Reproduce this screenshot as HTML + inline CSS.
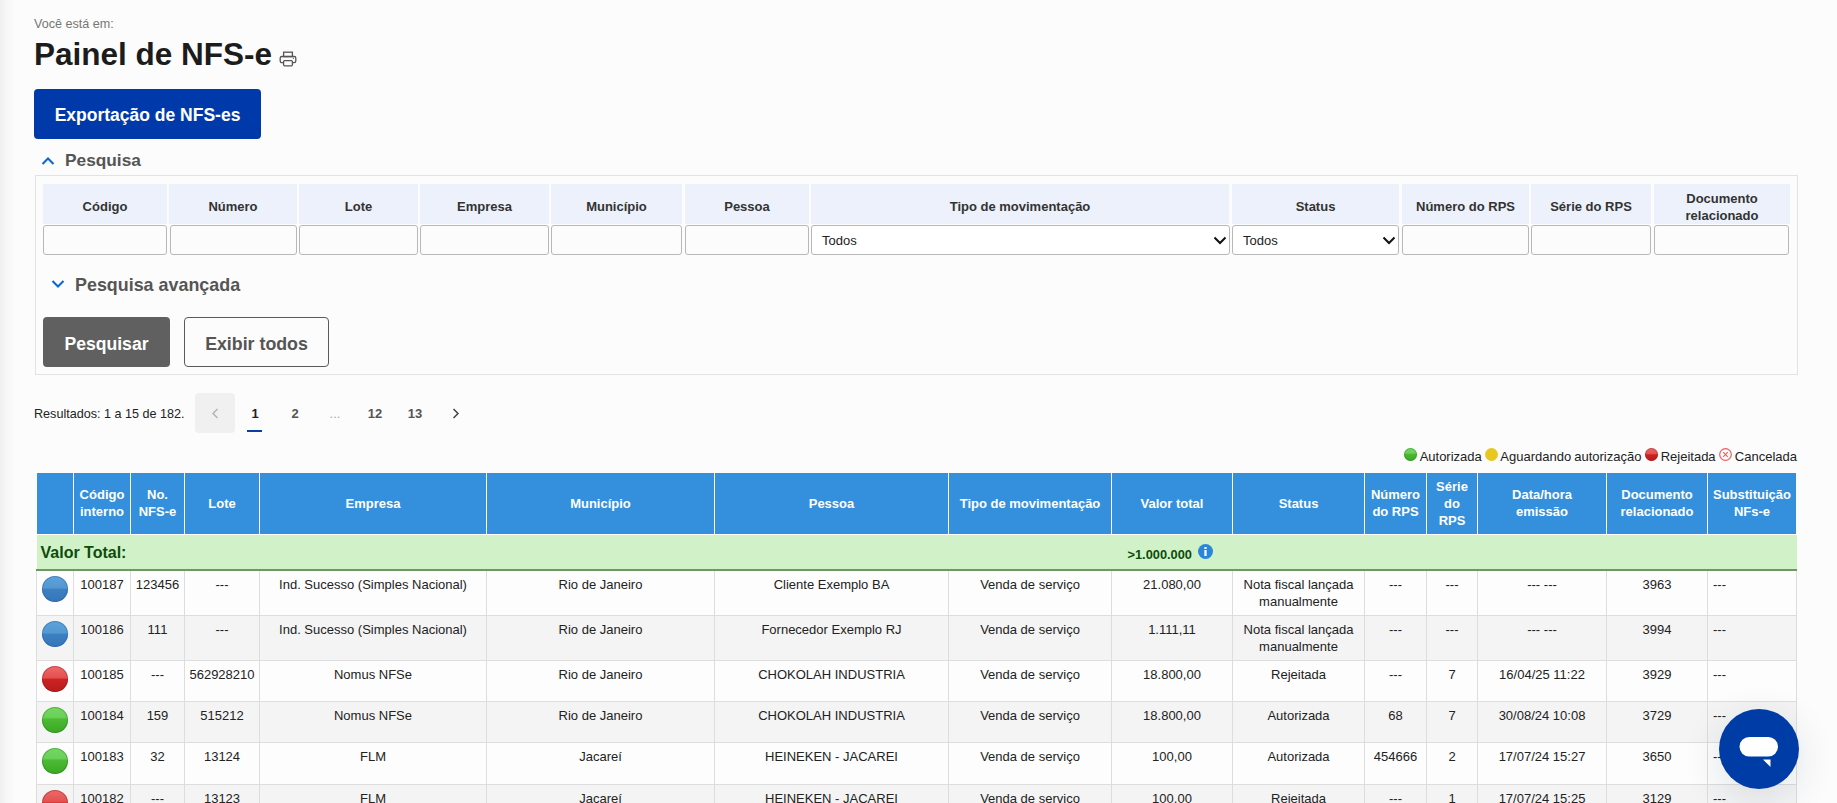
<!DOCTYPE html>
<html><head><meta charset="utf-8">
<style>
*{box-sizing:border-box;margin:0;padding:0}
html,body{width:1837px;height:803px;overflow:hidden;background:#fcfcfc;font-family:"Liberation Sans",sans-serif;color:#333}
.shadow{position:absolute;left:0;top:0;width:16px;height:803px;background:linear-gradient(to right,rgba(0,12,6,0.055),rgba(0,12,6,0.025) 40%,rgba(0,0,0,0))}
.abs{position:absolute;white-space:nowrap}
#crumb{left:34px;top:17px;font-size:12.6px;color:#767676}
#title{left:34px;top:36px;font-size:31.5px;font-weight:bold;color:#1c1c1c;letter-spacing:0}
#printer{left:279px;top:50px;width:18px;height:17px}
#export{left:34px;top:89px;width:227px;height:50px;background:#003aaa;border-radius:4px;color:#fff;font-weight:bold;font-size:17.5px;line-height:53px;text-align:center}
#pesq{left:42px;top:150px;font-size:17.3px;font-weight:bold;color:#555}
#pesq svg{position:absolute;left:-1px;top:6px}
#pesq span{position:absolute;left:23px;top:0}
#box{left:35px;top:175px;width:1763px;height:200px;border:1px solid #e3e3e3}
.fh{position:absolute;top:184px;height:40px;background:#ecf1fb;font-weight:bold;font-size:13px;color:#333;text-align:center;display:flex;align-items:center;justify-content:center;line-height:17px;white-space:normal;padding-top:4px}
.fi{position:absolute;top:225px;height:30px;border:1px solid #b8b8b8;border-radius:3px;background:#fcfcfc}
.fs{position:absolute;top:225px;height:30px;border:1px solid #b8b8b8;border-radius:3px;background:#fff;font-size:13px;color:#222;padding-left:10px;line-height:30px}
.fs svg{position:absolute;right:2px;top:10px}
#adv{left:52px;top:275px;font-size:17.9px;font-weight:bold;color:#555}
#btn1{left:43px;top:317px;width:127px;height:50px;background:#606060;border-radius:4px;color:#fff;font-weight:bold;font-size:17.6px;line-height:54px;text-align:center}
#btn2{left:184px;top:317px;width:145px;height:50px;border:1px solid #5a5a5a;border-radius:4px;color:#555;font-weight:bold;font-size:17.8px;line-height:52px;text-align:center;background:#fcfcfc}
#res{left:34px;top:407px;font-size:12.6px;color:#222}
#prev{left:195px;top:393px;width:40px;height:40px;background:#f0f0f0;border-radius:4px}
.pg{position:absolute;top:406px;font-size:13px;font-weight:bold;color:#555;width:40px;text-align:center}
#legend{right:40px;top:448px;font-size:13px;color:#222;word-spacing:-0.5px}
.dot{display:inline-block;width:13px;height:13px;border-radius:50%;vertical-align:0px}
table{position:absolute;left:36px;top:473px;border-collapse:collapse;table-layout:fixed;width:1760px}
th{background:#348fdc;color:#fff;font-size:13px;font-weight:bold;line-height:17px;height:61px;border:1px solid #fff;border-top:0;padding:0 2px}
td{font-size:13px;color:#222;text-align:center;vertical-align:top;border:1px solid #ddd;padding:5px 2px 0;line-height:17px;background:#fdfdfd}
tr.r2{height:45px}tr.r1{height:41px}
tr.alt td{background:#f4f4f4}
tr.tot td{background:#d1f1c9;color:#0b4d0b;font-weight:bold;border:0;border-bottom:2px solid #6a9a62;height:36px;vertical-align:middle;padding:2px 0 0}
.ball{width:26px;height:26px;border-radius:50%;margin:0 0 0 3px}
.b-blue{background:linear-gradient(#5ea2da,#5498d2 45%,#3c80c2 52%,#3576b8);box-shadow:inset 0 0 0 1px rgba(30,80,150,0.35)}
.b-red{background:linear-gradient(#ee6a6a,#e45050 45%,#cc2222 52%,#b81c1c);box-shadow:inset 0 0 0 1px rgba(120,20,20,0.35)}
.b-green{background:linear-gradient(#74d862,#6ad058 40%,#4cba34 47%,#3aa822);box-shadow:inset 0 0 0 1px rgba(30,110,20,0.35)}
#chat{left:1719px;top:709px;width:80px;height:80px;border-radius:50%;background:#003ca6;box-shadow:0 10px 40px rgba(10,40,70,0.12)}
</style></head>
<body>
<div class="shadow"></div>
<div id="crumb" class="abs">Você está em:</div>
<div id="title" class="abs">Painel de NFS-e</div>
<svg id="printer" class="abs" viewBox="0 0 18 17"><g fill="none" stroke="#555" stroke-width="1.3"><rect x="4.6" y="2.2" width="8.8" height="4.4"/><rect x="1.2" y="6.5" width="15.6" height="6.2" rx="1.6"/><rect x="4.6" y="10.6" width="8.8" height="5.2" rx="1" fill="#fcfcfc"/></g><circle cx="14.4" cy="8.5" r="0.6" fill="#555"/></svg>
<div id="export" class="abs">Exportação de NFS-es</div>
<div id="pesq" class="abs"><svg width="14" height="10" viewBox="0 0 14 10"><path d="M1.5 8 L7 2.5 L12.5 8" fill="none" stroke="#0a68d4" stroke-width="2.1"/></svg><span>Pesquisa</span></div>
<div id="box" class="abs"></div>

<div class="fh" style="left:43px;width:124px">Código</div>
<div class="fh" style="left:169px;width:128px">Número</div>
<div class="fh" style="left:299px;width:119px">Lote</div>
<div class="fh" style="left:420px;width:129px">Empresa</div>
<div class="fh" style="left:551px;width:131px">Município</div>
<div class="fh" style="left:685px;width:124px">Pessoa</div>
<div class="fh" style="left:811px;width:418px">Tipo de movimentação</div>
<div class="fh" style="left:1232px;width:167px">Status</div>
<div class="fh" style="left:1402px;width:127px">Número do RPS</div>
<div class="fh" style="left:1531px;width:120px">Série do RPS</div>
<div class="fh" style="left:1654px;width:136px;padding-top:6px">Documento<br>relacionado</div>

<div class="fi" style="left:43px;width:124px"></div>
<div class="fi" style="left:170px;width:127px"></div>
<div class="fi" style="left:299px;width:119px"></div>
<div class="fi" style="left:420px;width:129px"></div>
<div class="fi" style="left:551px;width:131px"></div>
<div class="fi" style="left:685px;width:124px"></div>
<div class="fs" style="left:811px;width:419px">Todos<svg width="14" height="9" viewBox="0 0 14 9"><path d="M1.5 1.5 L7 7 L12.5 1.5" fill="none" stroke="#111" stroke-width="2"/></svg></div>
<div class="fs" style="left:1232px;width:167px">Todos<svg width="14" height="9" viewBox="0 0 14 9"><path d="M1.5 1.5 L7 7 L12.5 1.5" fill="none" stroke="#111" stroke-width="2"/></svg></div>
<div class="fi" style="left:1402px;width:127px"></div>
<div class="fi" style="left:1531px;width:120px"></div>
<div class="fi" style="left:1654px;width:135px"></div>

<div id="adv" class="abs"><svg width="14" height="10" viewBox="0 0 14 10" style="position:absolute;left:-1px;top:4px"><path d="M1.5 2 L7 7.5 L12.5 2" fill="none" stroke="#0a68d4" stroke-width="2.1"/></svg><span style="position:absolute;left:23px;top:0">Pesquisa avançada</span></div>
<div id="btn1" class="abs">Pesquisar</div>
<div id="btn2" class="abs">Exibir todos</div>

<div id="res" class="abs">Resultados: 1 a 15 de 182.</div>
<div id="prev" class="abs"></div>
<div class="pg" style="left:235px;color:#222">1</div>
<div class="pg" style="left:275px">2</div>
<div class="pg" style="left:315px;color:#aaa;font-weight:normal">...</div>
<div class="pg" style="left:355px">12</div>
<div class="pg" style="left:395px">13</div>
<svg class="abs" style="left:211px;top:408px" width="8" height="11" viewBox="0 0 8 11"><path d="M6.5 1 L2 5.5 L6.5 10" fill="none" stroke="#b5b5b5" stroke-width="1.5"/></svg>
<svg class="abs" style="left:452px;top:408px" width="8" height="11" viewBox="0 0 8 11"><path d="M1.5 1 L6 5.5 L1.5 10" fill="none" stroke="#444" stroke-width="1.5"/></svg>
<div class="abs" style="left:247px;top:430px;width:15px;height:2px;background:#0b3ea3"></div>

<div id="legend" class="abs"><span class="dot b-green"></span> Autorizada <span class="dot" style="background:#e8c820"></span> Aguardando autorização <span class="dot b-red"></span> Rejeitada <svg width="13" height="13" viewBox="0 0 13 13" style="vertical-align:0px"><circle cx="6.5" cy="6.5" r="5.8" fill="none" stroke="#e86060" stroke-width="1.2"/><path d="M4.2 4.2 L8.8 8.8 M8.8 4.2 L4.2 8.8" stroke="#e86060" stroke-width="1.1"/></svg> Cancelada</div>

<table>
<colgroup><col style="width:37px"><col style="width:57px"><col style="width:54px"><col style="width:75px"><col style="width:227px"><col style="width:228px"><col style="width:234px"><col style="width:163px"><col style="width:121px"><col style="width:132px"><col style="width:62px"><col style="width:51px"><col style="width:129px"><col style="width:101px"><col style="width:89px"></colgroup>
<tr><th></th><th>Código interno</th><th>No. NFS-e</th><th>Lote</th><th>Empresa</th><th>Município</th><th>Pessoa</th><th>Tipo de movimentação</th><th>Valor total</th><th>Status</th><th>Número do RPS</th><th>Série do RPS</th><th>Data/hora<br>emissão</th><th>Documento relacionado</th><th>Substituição NFs-e</th></tr>
<tr class="tot"><td colspan="8" style="text-align:left;padding-left:4px;font-size:16px">Valor Total:</td><td style="font-size:12.8px;padding:9px 3px 0 0;vertical-align:top;line-height:17px">&gt;1.000.000 <svg style="vertical-align:0px;margin-left:3px" width="15" height="15" viewBox="0 0 15 15"><circle cx="7.5" cy="7.5" r="7.5" fill="#2a86d8"/><rect x="6.4" y="3" width="2.2" height="2" fill="#fff"/><rect x="6.4" y="6" width="2.2" height="6" fill="#fff"/></svg></td><td colspan="6"></td></tr>
<tr class="r2"><td><div class="ball b-blue"></div></td><td>100187</td><td>123456</td><td>---</td><td>Ind. Sucesso (Simples Nacional)</td><td>Rio de Janeiro</td><td>Cliente Exemplo BA</td><td>Venda de serviço</td><td>21.080,00</td><td>Nota fiscal lançada manualmente</td><td>---</td><td>---</td><td>--- ---</td><td>3963</td><td style="text-align:left;padding-left:5px">---</td></tr>
<tr class="alt r2"><td><div class="ball b-blue"></div></td><td>100186</td><td>111</td><td>---</td><td>Ind. Sucesso (Simples Nacional)</td><td>Rio de Janeiro</td><td>Fornecedor Exemplo RJ</td><td>Venda de serviço</td><td>1.111,11</td><td>Nota fiscal lançada manualmente</td><td>---</td><td>---</td><td>--- ---</td><td>3994</td><td style="text-align:left;padding-left:5px">---</td></tr>
<tr class="r1"><td><div class="ball b-red"></div></td><td>100185</td><td>---</td><td>562928210</td><td>Nomus NFSe</td><td>Rio de Janeiro</td><td>CHOKOLAH INDUSTRIA</td><td>Venda de serviço</td><td>18.800,00</td><td>Rejeitada</td><td>---</td><td>7</td><td>16/04/25 11:22</td><td>3929</td><td style="text-align:left;padding-left:5px">---</td></tr>
<tr class="alt r1"><td><div class="ball b-green"></div></td><td>100184</td><td>159</td><td>515212</td><td>Nomus NFSe</td><td>Rio de Janeiro</td><td>CHOKOLAH INDUSTRIA</td><td>Venda de serviço</td><td>18.800,00</td><td>Autorizada</td><td>68</td><td>7</td><td>30/08/24 10:08</td><td>3729</td><td style="text-align:left;padding-left:5px">---</td></tr>
<tr class="r1" style="height:42px"><td><div class="ball b-green"></div></td><td>100183</td><td>32</td><td>13124</td><td>FLM</td><td>Jacareí</td><td>HEINEKEN - JACAREI</td><td>Venda de serviço</td><td>100,00</td><td>Autorizada</td><td>454666</td><td>2</td><td>17/07/24 15:27</td><td>3650</td><td style="text-align:left;padding-left:5px">---</td></tr>
<tr class="alt r1"><td><div class="ball b-red"></div></td><td>100182</td><td>---</td><td>13123</td><td>FLM</td><td>Jacareí</td><td>HEINEKEN - JACAREI</td><td>Venda de serviço</td><td>100,00</td><td>Rejeitada</td><td>---</td><td>1</td><td>17/07/24 15:25</td><td>3129</td><td style="text-align:left;padding-left:5px">---</td></tr>
</table>

<div id="chat" class="abs"><svg width="80" height="80" viewBox="0 0 80 80" style="position:absolute;left:0;top:0"><rect x="20.5" y="28" width="38.5" height="19.5" rx="9.75" fill="#fff"/><path d="M44 50.5 L51.5 50.5 L51.5 58 Z" fill="#fff"/></svg></div>
</body></html>
